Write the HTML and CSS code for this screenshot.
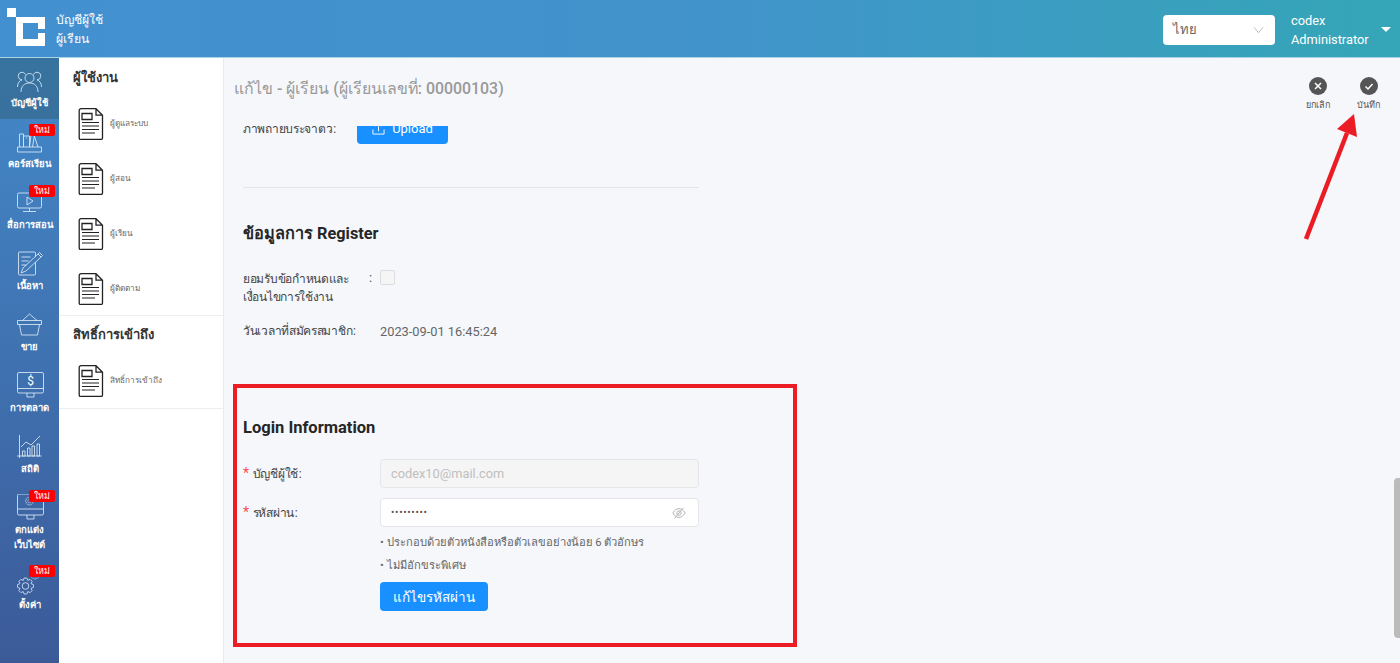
FILE: index.html
```html
<!DOCTYPE html>
<html lang="th">
<head>
<meta charset="utf-8">
<title>บัญชีผู้ใช้ ผู้เรียน</title>
<link rel="stylesheet" href="styles.css">
</head>
<body>
<svg class="defs">
  <symbol id="doc" viewBox="0 0 26 32">
    <path class="o" d="M3 .7h15l6.500 6.500V30a1.500 1.500 0 0 1-1.500 1.500H3A1.500 1.500 0 0 1 1.200 30V2.500A1.800 1.800 0 0 1 3 .7zM18 .7v6.500h6.500"/>
    <path class="o" d="M4 5.500h10v6H4z"/>
    <path class="l" d="M4 14.500h17M4 18h17M4 21.500h17M4 25h13"/>
  </symbol>
  <symbol id="gear" viewBox="-10 -10 20 20">
    <polygon points="5.82,-2.41 8.37,-1.48 8.37,1.48 5.82,2.41 6.96,4.88 4.88,6.96 2.41,5.82 1.48,8.37 -1.48,8.37 -2.41,5.82 -4.88,6.96 -6.96,4.88 -5.82,2.41 -8.37,1.48 -8.37,-1.48 -5.82,-2.41 -6.96,-4.88 -4.88,-6.96 -2.41,-5.82 -1.48,-8.37 1.48,-8.37 2.41,-5.82 4.88,-6.96 6.96,-4.88"/>
    <circle r="3.500"/>
  </symbol>
</svg>
<header class="topbar">
  <svg class="logo" viewBox="0 0 46 46"><path d="M7 8h9v9H7z"/><path fill-rule="evenodd" d="M16 17h29v12h-7v-6H23v16h15v-6h7v13H16z"/></svg>
  <div class="crumb"><span>บัญชีผู้ใช้</span><span>ผู้เรียน</span></div>
  <div class="top-right">
    <div class="lang"><span>ไทย</span><svg viewBox="0 0 12 8"><path d="M1 1l5 6 5-6"/></svg></div>
    <div class="user"><span>codex</span><span>Administrator</span></div>
    <div class="caret"></div>
  </div>
</header>
<div class="body">
  <nav class="rail">
    <a class="rail-item active">
      <svg viewBox="0 0 28 28"><circle cx="13.500" cy="11" r="4.500"/><path d="M9.500 7.500a3.800 3.800 0 1 0-3.500 5.300M17.500 7.500a3.800 3.800 0 1 1 3.500 5.300M5 25c0-6 3.500-9 8.500-9s8.500 3 8.500 9M1.500 20c0-4 2-6.500 4.500-7M25.500 20c0-4-2-6.500-4.500-7"/></svg>
      <span>บัญชีผู้ใช้</span>
    </a>
    <a class="rail-item">
      <svg viewBox="0 0 28 28"><path d="M3.500 19V6h4v13M7.500 19V8h6v11M10 10h1M13.500 19L15 7M15 7l3.500 0 -2 12M18 7l4 12M1.500 19h24v5h-24z"/></svg>
      <span>คอร์สเรียน</span><b class="new">ใหม่</b>
    </a>
    <a class="rail-item">
      <svg viewBox="0 0 28 28"><rect x="1.500" y="4" width="24" height="15" rx="1.500"/><path d="M11 8l6 4-6 4zM13.500 19v3M7 22.500h13"/></svg>
      <span>สื่อการสอน</span><b class="new">ใหม่</b>
    </a>
    <a class="rail-item">
      <svg viewBox="0 0 28 28"><path d="M19.500 12v12a1 1 0 0 1-1 1h-15a1 1 0 0 1-1-1V3a1 1 0 0 1 1-1h15a1 1 0 0 1 1 1v4M5.500 7h9M5.500 11h7M5.500 15h5M5 23l2-5L22 4l3 3L10 21zM22 4l1.500-1.500 3 3L25 7"/></svg>
      <span>เนื้อหา</span>
    </a>
    <a class="rail-item">
      <svg viewBox="0 0 28 28"><path d="M1.500 9.500h24v4h-24zM3.500 13.500l2 10.500h16l2-10.500M6.500 9.500L13.500 3l7.500 6.500"/></svg>
      <span>ขาย</span>
    </a>
    <a class="rail-item">
      <svg viewBox="0 0 28 28"><rect x="1.500" y="0.500" width="26" height="20.500" rx="1.500"/><path d="M1.500 16.500h26M11 21v4h7v-4"/><text x="14.500" y="13" class="dollar">$</text></svg>
      <span>การตลาด</span>
    </a>
    <a class="rail-item">
      <svg viewBox="0 0 28 28"><path d="M3.500 2v23M1 23h24.500M6.500 23v-5h2.500v5zM11.500 23v-8h2.500v8zM16 23v-10h2.500v10zM21 23v-12h2.500v12zM5 14l5-5 5 3 9-9"/></svg>
      <span>สถิติ</span>
    </a>
    <a class="rail-item two">
      <svg viewBox="0 0 28 28"><rect x="1.500" y="0" width="26" height="21" rx="1.500"/><path d="M1.500 15h26M11 21v4h7v-4"/><use href="#gear" x="8.500" y="2" width="10" height="10"/></svg>
      <span>ตกแต่ง<br>เว็บไซต์</span><b class="new">ใหม่</b>
    </a>
    <a class="rail-item">
      <svg viewBox="0 0 28 28"><use href="#gear" x="0" y="7.500" width="19" height="19"/><use href="#gear" x="14" y="1" width="10" height="10"/></svg>
      <span>ตั้งค่า</span><b class="new">ใหม่</b>
    </a>
  </nav>

  <aside class="side">
    <section class="side-group">
      <h3>ผู้ใช้งาน</h3>
      <a class="side-item"><svg class="doc"><use href="#doc"/></svg><span>ผู้ดูแลระบบ</span></a>
      <a class="side-item"><svg class="doc"><use href="#doc"/></svg><span>ผู้สอน</span></a>
      <a class="side-item"><svg class="doc"><use href="#doc"/></svg><span>ผู้เรียน</span></a>
      <a class="side-item"><svg class="doc"><use href="#doc"/></svg><span>ผู้ติดตาม</span></a>
    </section>
    <section class="side-group">
      <h3>สิทธิ์การเข้าถึง</h3>
      <a class="side-item"><svg class="doc"><use href="#doc"/></svg><span>สิทธิ์การเข้าถึง</span></a>
    </section>
  </aside>

  <main class="main">
    <div class="page-head">
      <h1>แก้ไข - ผู้เรียน (ผู้เรียนเลขที่: 00000103)</h1>
      <div class="actions">
        <a class="action"><svg viewBox="0 0 18 18"><circle cx="9" cy="9" r="9" class="fill"/><path d="M6 6l6 6M12 6l-6 6"/></svg><span>ยกเลิก</span></a>
        <a class="action"><svg viewBox="0 0 18 18"><circle cx="9" cy="9" r="9" class="fill"/><path d="M5.500 9.500l2.500 2.500 4.500-5"/></svg><span>บันทึก</span></a>
      </div>
    </div>
    <div class="scroller">
      <div class="form">
        <div class="row upload-row">
          <label>ภาพถ่ายประจำตัว&#8202;:</label>
          <button class="btn upload"><svg viewBox="0 0 14 14"><path d="M1 8v5h12V8M7 10V2M4 4.500L7 1.500l3 3"/></svg>Upload</button>
        </div>
        <hr>
        <h2>ข้อมูลการ Register</h2>
        <div class="row terms">
          <label class="long">ยอมรับข้อกำหนดและ<br>เงื่อนไขการใช้งาน</label><span class="colon">:</span>
          <span class="check"></span>
        </div>
        <div class="row date">
          <label>วันเวลาที่สมัครสมาชิก&#8202;:</label>
          <span class="value">2023-09-01 16:45:24</span>
        </div>
        <h2 class="login">Login Information</h2>
        <div class="row field">
          <label><i>*</i>บัญชีผู้ใช้&#8202;:</label>
          <input class="input" disabled placeholder="codex10@mail.com">
        </div>
        <div class="row field">
          <label><i>*</i>รหัสผ่าน&#8202;:</label>
          <div class="input pass">
            <span>•••••••••</span>
            <svg viewBox="0 0 16 16"><path d="M1 8c2-3.500 4.500-5 7-5s5 1.500 7 5c-2 3.500-4.500 5-7 5s-5-1.500-7-5zM3 14L13 2"/><circle cx="8" cy="8" r="2.500"/></svg>
          </div>
        </div>
        <ul class="hints">
          <li>ประกอบด้วยตัวหนังสือหรือตัวเลขอย่างน้อย 6 ตัวอักษร</li>
          <li>ไม่มีอักขระพิเศษ</li>
        </ul>
        <button class="btn change">แก้ไขรหัสผ่าน</button>
      </div>
    </div>
    <div class="thumb"></div>
  </main>
</div>
<div class="mark-box"></div>
<svg class="mark-arrow" viewBox="0 0 60 130"><path d="M5 129L46 23"/><polygon points="53,4 36,19 56,27"/></svg>
</body>
</html>
```

FILE: styles.css
```css
* { box-sizing: border-box; }
html, body { margin: 0; height: 100%; overflow: hidden; }
body { font-family: Roboto, "Noto Sans", "Liberation Sans", sans-serif; color: #333; background: #f5f7fb; display: flex; flex-direction: column; }
.defs { position: absolute; width: 0; height: 0; }

.topbar { height: 58px; flex: none; display: flex; align-items: center; background: linear-gradient(90deg, #4390d0 0%, #4193cb 50%, #35a6b7 100%); color: #fff; border-bottom: 1px solid #a9d3e6; }
.logo { width: 46px; height: 46px; fill: #fff; margin: 0 10px 0 0; flex: none; align-self: flex-start; }
.crumb { display: flex; flex-direction: column; font-size: 12.200px; line-height: 19px; margin-top: 2px; }
.top-right { margin-left: auto; margin-top: 2px; display: flex; align-items: center; }
.lang { width: 112px; height: 30px; background: #fff; border-radius: 4px; display: flex; align-items: center; justify-content: space-between; padding: 0 11px 0 10px; color: #666; font-size: 13px; }
.lang svg { width: 11px; height: 8px; fill: none; stroke: #bbb; }
.user { display: flex; flex-direction: column; margin-left: 16px; font-size: 12.800px; line-height: 19px; width: 90px; }
.caret { width: 0; height: 0; border: 5px solid transparent; border-top: 5px solid #fff; border-bottom: 0; margin: 0 9px 0 0; }

.body { flex: 1; min-height: 0; display: flex; }

.rail { width: 59px; flex: none; background: linear-gradient(180deg, #4389c9 0%, #3c5a98 100%); display: flex; flex-direction: column; }
.rail-item { position: relative; display: flex; flex-direction: column; align-items: center; height: 61px; padding-top: 9px; color: #fff; font-size: 9.500px; line-height: 15px; text-align: center; font-weight: 700; white-space: nowrap; }
.rail-item.active { background: rgba(50, 100, 130, .6); }
.rail-item.two { height: 75px; }
.rail-item svg { width: 28px; height: 28px; flex: none; fill: none; stroke: #d5e4f3; stroke-width: .9; }
.rail-item .dollar { font-size: 12px; fill: #fff; stroke: none; text-anchor: middle; font-weight: 400; }
.new { position: absolute; left: 29px; top: 5px; width: 26px; height: 12px; background: #f00; border-radius: 2px; color: #fff; font-size: 9px; line-height: 12px; font-weight: 400; }

.side { width: 165px; flex: none; background: #fff; border-right: 1px solid #e9ebf0; }
.side-group { border-bottom: 1.500px solid #eceef1; padding-bottom: 7px; }
.side-group + .side-group { padding-bottom: 8px; }
.side-group h3 { margin: 0; padding: 10px 14px 0; font-size: 13px; line-height: 20px; font-weight: 700; color: #333; }
.side-group + .side-group h3 { padding-top: 9px; }
.side-item { display: flex; align-items: center; height: 55px; padding: 20px 0 3px 19px; font-size: 8.200px; color: #666; }
.side-item span { margin-top: -2px; }
.doc { width: 26px; height: 32px; margin-right: 6px; flex: none; fill: none; stroke: #222; }
#doc .l { stroke-width: 1.100; }
#doc .o { stroke-width: 1.300; }

.main { position: relative; flex: 1; min-width: 0; display: flex; flex-direction: column; background: #f5f7fb; }
.page-head { height: 68px; flex: none; display: flex; padding: 0 0 0 10px; }
.page-head h1 { margin: 21px 0 0; font-size: 15.900px; line-height: 20px; font-weight: 500; color: #999; }
.actions { margin-left: auto; display: flex; gap: 20px; padding: 19px 16px 0 0; }
.action { display: flex; flex-direction: column; align-items: center; width: 31px; font-size: 9px; line-height: 14px; color: #555; gap: 3px; }
.action svg { width: 18px; height: 18px; fill: none; stroke: #fff; stroke-width: 1.500; }
.action .fill { fill: #555; stroke: none; }

.scroller { flex: 1; min-height: 0; overflow: hidden; }
.form { margin-top: -14px; padding-left: 19px; width: 475px; font-size: 12.800px; color: #555; }
.row { display: flex; }
.row label { width: 137px; flex: none; font-size: 12px; letter-spacing: -.3px; color: #444; }
.upload-row { height: 32px; align-items: center; }
.upload-row label { width: 114px; }
.btn { background: #1890ff; color: #fff; border: 0; border-radius: 4px; font-family: inherit; }
.upload { width: 91px; height: 32px; font-size: 13px; display: flex; align-items: center; justify-content: center; gap: 7px; }
.upload svg { width: 13px; height: 13px; fill: none; stroke: #fff; }
hr { border: 0; height: 1px; background: #e4e5e8; margin: 43px 0 0; }
h2 { margin: 36px 0 0; font-size: 16.300px; line-height: 20px; font-weight: 700; color: #262626; }
.terms { margin-top: 26px; }
.row .long { width: 126px; line-height: 18px; }
.colon { width: 11px; }
.check { width: 15px; height: 15px; border: 1px solid #ddd; border-radius: 2px; background: #f5f5f5; }
.date { margin-top: 16px; line-height: 19px; }
.value { color: #666; }
h2.login { margin-top: 77px; font-size: 16.500px; }
.field { align-items: center; height: 29px; margin-top: 10px; }
h2 + .field { margin-top: 21px; }
.field label i { color: #ff4d4f; font-style: normal; font-size: 14px; margin-right: 4px; }
.input { width: 319px; height: 29px; border: 1px solid #e4e6ea; border-radius: 4px; background: #fff; padding: 0 10px; font: inherit; }
.input:disabled { background: #f5f5f5; }
.input::placeholder { color: #bfbfbf; }
.pass { display: flex; align-items: center; justify-content: space-between; padding-right: 12px; color: #555; }
.pass span { font-size: 10px; letter-spacing: .7px; }
.pass svg { width: 14px; height: 14px; fill: none; stroke: #aaa; }
.hints { list-style: none; margin: 0; padding: 4px 0 0 137px; font-size: 11.200px; line-height: 23px; color: #666; }
.hints li::before { content: "• "; }
.change { display: block; margin: 5px 0 0 137px; width: 108px; height: 29px; font-size: 13.500px; font-weight: 500; }
.thumb { position: absolute; right: 0; top: 420px; width: 6px; height: 160px; background: #bbb; border-radius: 4px 0 0 4px; }

.mark-box { position: absolute; left: 233px; top: 384px; width: 564px; height: 263px; border: 4px solid #ec1c24; }
.mark-arrow { position: absolute; left: 1301px; top: 110px; width: 60px; height: 130px; }
.mark-arrow path { stroke: #ec1c24; stroke-width: 4.500; fill: none; }
.mark-arrow polygon { fill: #ec1c24; }
```
